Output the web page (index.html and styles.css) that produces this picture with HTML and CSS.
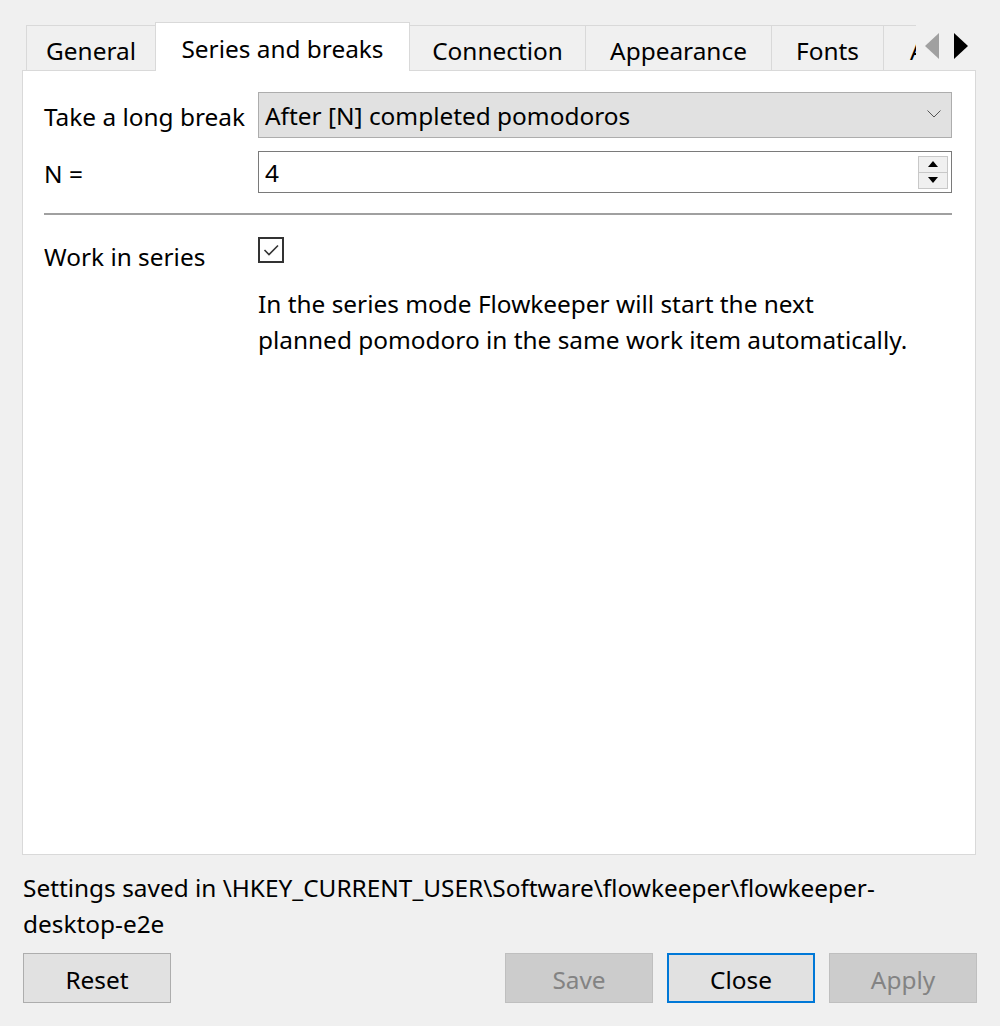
FILE: index.html
```html
<!DOCTYPE html>
<html>
<head>
<meta charset="utf-8">
<link rel="stylesheet" href="styles.css">
</head>
<body>
<div class="dialog">
  <div class="tabbar">
    <div class="tabstrip">
      <div class="tab t1">General</div>
      <div class="tab t2 selected">Series and breaks</div>
      <div class="tab t3">Connection</div>
      <div class="tab t4">Appearance</div>
      <div class="tab t5">Fonts</div>
      <div class="tab t6">Audio</div>
    </div>
    <div class="arrows">
      <svg width="16" height="26" viewBox="0 0 16 26" class="arr"><polygon points="15,0 15,26 1,13" fill="#a0a0a0"/></svg>
      <svg width="16" height="26" viewBox="0 0 16 26" class="arr"><polygon points="1,0 1,26 15,13" fill="#000"/></svg>
    </div>
  </div>
  <div class="panel">
    <div class="form">
      <div class="label">Take a long break</div>
      <div class="combo">
        <span class="val">After [N] completed pomodoros</span>
        <svg width="14" height="8" viewBox="0 0 14 8" class="chev"><polyline points="0.5,0.5 7,7 13.5,0.5" fill="none" stroke="#555" stroke-width="1"/></svg>
      </div>
      <div class="label">N =</div>
      <div class="spin">
        <span class="val">4</span>
        <div class="spinbtns">
          <div class="sb"><svg width="10" height="6" viewBox="0 0 10 6"><polygon points="0,6 10,6 5,0" fill="#000"/></svg></div>
          <div class="sb"><svg width="10" height="6" viewBox="0 0 10 6"><polygon points="0,0 10,0 5,6" fill="#000"/></svg></div>
        </div>
      </div>
    </div>
    <div class="sep"></div>
    <div class="form form2">
      <div class="label">Work in series</div>
      <div class="field">
        <div class="check"><svg width="22" height="22" viewBox="0 0 22 22"><polyline points="4.5,11 9,15.5 18,6.5" fill="none" stroke="#333" stroke-width="1.6"/></svg></div>
        <p class="desc">In the series mode Flowkeeper will start the next<br>planned pomodoro in the same work item automatically.</p>
      </div>
    </div>
  </div>
  <p class="saved">Settings saved in \HKEY_CURRENT_USER\Software\flowkeeper\flowkeeper-<br>desktop-e2e</p>
  <div class="buttons">
    <button class="btn">Reset</button>
    <div class="spacer"></div>
    <button class="btn disabled">Save</button>
    <button class="btn focus">Close</button>
    <button class="btn disabled">Apply</button>
  </div>
</div>
</body>
</html>
```
FILE: styles.css
```css
html, body {
  margin: 0;
  padding: 0;
  background: #f0f0f0;
}
body {
  font-family: "Noto Sans", "Open Sans", sans-serif;
  font-size: 24.4px;
  line-height: 34px;
  color: #000;
  width: 1000px;
  height: 1026px;
  overflow: hidden;
}
.dialog {
  padding: 22px 24px 0 22px;
}
.tabbar {
  display: flex;
  height: 48px;
  position: relative;
  z-index: 2;
}
.tabstrip {
  display: flex;
  align-items: flex-end;
  width: 894px;
  padding-left: 4px;
  box-sizing: border-box;
  overflow: hidden;
  height: 49px;
}
.tab {
  flex: none;
  box-sizing: border-box;
  height: 45px;
  margin-bottom: 1px;
  border: 1px solid #d9d9d9;
  border-bottom: none;
  border-left: none;
  background: #f0f0f0;
  display: flex;
  align-items: center;
  justify-content: center;
  padding-top: 6px;
  white-space: nowrap;
}
.t1 { width: 130px; border-left: 1px solid #d9d9d9; }
.t2 { width: 255px; }
.t3 { width: 176px; }
.t4 { width: 186px; }
.t5 { width: 112px; }
.t6 { width: 120px; justify-content: flex-start; padding-left: 26px; }
.tab.selected {
  height: 49px;
  margin-bottom: 0;
  background: #fff;
  border-left: 1px solid #d9d9d9;
  margin-left: -1px;
  padding-top: 4px;
}
.arrows {
  display: flex;
  gap: 13px;
  padding: 11px 0 0 8px;
}
.arr { display: block; }
.panel {
  position: relative;
  z-index: 1;
  background: #fff;
  border: 1px solid #d9d9d9;
  height: 785px;
  box-sizing: border-box;
  padding: 21px 23px 0 21px;
}
.form {
  display: grid;
  grid-template-columns: 214px 1fr;
  row-gap: 13px;
  align-items: center;
}
.label {
  white-space: nowrap;
  padding-top: 3px;
}
.val {
  padding-top: 2px;
}
.combo {
  box-sizing: border-box;
  height: 46px;
  background: #e1e1e1;
  border: 1px solid #adadad;
  display: flex;
  align-items: center;
  justify-content: space-between;
  padding: 0 10px 0 6px;
}
.chev { display: block; margin-top: -2px; }
.spin {
  box-sizing: border-box;
  height: 42px;
  background: #fff;
  border: 1px solid #7a7a7a;
  display: flex;
  align-items: center;
  justify-content: space-between;
  padding: 0 3px 0 6px;
}
.spinbtns {
  display: flex;
  flex-direction: column;
  width: 30px;
}
.sb {
  box-sizing: border-box;
  height: 17px;
  border: 1px solid #c8c8c8;
  background: #f0f0f0;
  display: flex;
  align-items: center;
  justify-content: center;
}
.sb + .sb { border-top: none; height: 16px; }
.sb svg { display: block; }
.sep {
  height: 2px;
  background: #a0a0a0;
  margin: 20px 0 0 0;
}
.form2 {
  align-items: start;
  padding-top: 22px;
}
.form2 .label {
  padding-top: 3px;
}
.check {
  box-sizing: border-box;
  width: 26px;
  height: 26px;
  border: 2px solid #333;
  background: #fff;
}
.check svg { display: block; }
.desc {
  margin: 23px 0 0 0;
  line-height: 36px;
}
.saved {
  margin: 15px 0 0 1px;
  line-height: 36px;
}
.buttons {
  display: flex;
  gap: 14px;
  margin-top: 11px;
  margin-right: -1px;
  padding-left: 1px;
}
.spacer { flex: 1; }
.btn {
  width: 148px;
  height: 50px;
  box-sizing: border-box;
  border: 1px solid #adadad;
  background: #e1e1e1;
  font-family: inherit;
  font-size: 24.4px;
  color: #000;
  padding: 2px 0 0 0;
}
.btn.disabled {
  background: #cccccc;
  border-color: #bfbfbf;
  color: #838383;
}
.btn.focus {
  border: 2px solid #0078d7;
}
```
